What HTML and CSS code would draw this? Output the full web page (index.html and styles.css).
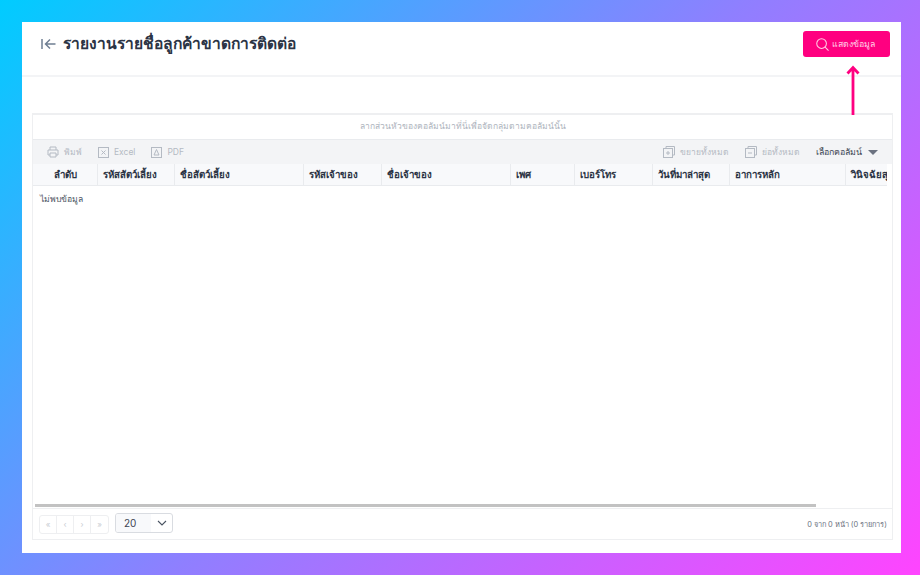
FILE: index.html
```html
<!DOCTYPE html>
<html lang="th">
<head>
<meta charset="utf-8">
<title>รายงานรายชื่อลูกค้าขาดการติดต่อ</title>
<link rel="stylesheet" href="styles.css">
</head>
<body>
<main class="panel">
  <header class="top">
    <div class="title-wrap">
      <svg class="back" width="15" height="12" viewBox="0 0 15 12" fill="none" stroke="#6f7f93" stroke-width="1.5"><path d="M1 1v10M14.500 6H5M9 1.500 4.500 6 9 10.500"/></svg>
      <h1>รายงานรายชื่อลูกค้าขาดการติดต่อ</h1>
    </div>
    <button class="show-btn">
      <svg width="13" height="13" viewBox="0 0 14 14" fill="none" stroke="#ffd0e6" stroke-width="1.100"><circle cx="6" cy="6" r="5.200"/><path d="m9.800 9.800 3.700 3.700"/></svg>
      <span>แสดงข้อมูล</span>
    </button>
  </header>
  <svg class="arrow" width="14" height="50" viewBox="0 0 14 50" fill="none" stroke="#ff0080" stroke-width="2.800"><path d="M7 50V3M1.500 8.500 7 2.500l5.500 6"/></svg>
  <section class="grid">
    <div class="group-panel">ลากส่วนหัวของคอลัมน์มาที่นี่เพื่อจัดกลุ่มตามคอลัมน์นั้น</div>
    <div class="toolbar">
      <div class="tools">
        <span class="tool"><svg width="12" height="12" viewBox="0 0 12 12" fill="none" stroke="#b4bac3"><path d="M3 4V1h6v3M3 9H1V4h10v5H9M3 7h6v4H3z"/></svg>พิมพ์</span>
        <span class="tool"><svg width="11" height="11" viewBox="0 0 11 11" fill="none" stroke="#b4bac3"><rect x=".5" y=".5" width="10" height="10"/><path d="m3.500 3.500 4 4M7.500 3.500l-4 4"/></svg>Excel</span>
        <span class="tool"><svg width="11" height="11" viewBox="0 0 11 11" fill="none" stroke="#b4bac3"><rect x=".5" y=".5" width="10" height="10"/><path d="M5.500 2.500 3 8h5z"/></svg>PDF</span>
      </div>
      <div class="tools">
        <span class="tool"><svg width="12" height="12" viewBox="0 0 12 12" fill="none" stroke="#b4bac3"><path d="M3 2V.5h8.500V9H10"/><rect x=".5" y="2.500" width="9" height="9"/><path d="M3 7h4M5 5v4"/></svg>ขยายทั้งหมด</span>
        <span class="tool"><svg width="12" height="12" viewBox="0 0 12 12" fill="none" stroke="#b4bac3"><path d="M3 2V.5h8.500V9H10"/><rect x=".5" y="2.500" width="9" height="9"/><path d="M3 7h4"/></svg>ย่อทั้งหมด</span>
        <span class="chooser">เลือกคอลัมน์<i class="caret"></i></span>
      </div>
    </div>
    <div class="head">
      <div class="cell c1">ลำดับ</div>
      <div class="cell c2">รหัสสัตว์เลี้ยง</div>
      <div class="cell c3">ชื่อสัตว์เลี้ยง</div>
      <div class="cell c2w">รหัสเจ้าของ</div>
      <div class="cell c3">ชื่อเจ้าของ</div>
      <div class="cell c4">เพศ</div>
      <div class="cell c2w">เบอร์โทร</div>
      <div class="cell c2">วันที่มาล่าสุด</div>
      <div class="cell c5">อาการหลัก</div>
      <div class="cell c6">วินิจฉัยสุดท้าย</div>
    </div>
    <div class="body">
      <p class="empty">ไม่พบข้อมูล</p>
      <div class="scroll"><div class="thumb"></div></div>
    </div>
    <footer class="pager">
      <div class="pager-left">
        <div class="pages">
          <span>«</span><span>‹</span><span>›</span><span>»</span>
        </div>
        <div class="size">
          <span class="size-val">20</span>
          <span class="size-btn"><svg width="10" height="6" viewBox="0 0 10 6" fill="none" stroke="#4b5563" stroke-width="1.100"><path d="m1 1 4 4 4-4"/></svg></span>
        </div>
      </div>
      <span class="info">0 จาก 0 หน้า (0 รายการ)</span>
    </footer>
  </section>
</main>
</body>
</html>
```
FILE: styles.css
```css
* { box-sizing: border-box; }
html, body { height: 100%; }
body {
  margin: 0;
  padding: 22px 19px 22px 22px;
  background: linear-gradient(135deg, #00ccff 0%, #8f7fff 50%, #ff44ff 100%);
  font-family: Inter, "Noto Sans", sans-serif;
  overflow: hidden;
}
.panel {
  position: relative;
  height: 531px;
  background: #fff;
  padding-bottom: 13px;
  display: flex;
  flex-direction: column;
}
.top {
  height: 55px;
  flex: none;
  display: flex;
  justify-content: space-between;
  align-items: flex-start;
  padding: 9px 11px 0 18px;
  border-bottom: 2px solid #f3f4f6;
}
.title-wrap { display: flex; align-items: center; gap: 7px; height: 25px; }
.back { margin-left: 1px; }
h1 { margin: 0; font-size: 15.600px; font-weight: 600; color: #2b3445; }
.show-btn {
  width: 87px;
  height: 26px;
  display: flex;
  align-items: center;
  padding: 0 0 0 13px;
  gap: 3px;
  border: 0;
  border-radius: 3px;
  background: #ff0080;
  color: #ffd0e6;
  font: 8.800px Inter, sans-serif;
}
.arrow { position: absolute; right: 41px; top: 43px; }
.grid {
  flex: 1;
  min-height: 0;
  margin: 36px 8px 0 10px;
  border: 1px solid #eeeff1;
  border-top-width: 2px;
  display: flex;
  flex-direction: column;
}
.group-panel {
  height: 24px;
  flex: none;
  display: flex;
  align-items: center;
  justify-content: center;
  padding-bottom: 2px;
  font-size: 8.500px;
  color: #aeb4bd;
}
.toolbar {
  height: 25px;
  flex: none;
  display: flex;
  justify-content: space-between;
  align-items: center;
  background: #f3f4f6;
  border-top: 1px solid #e9ebee;
  padding: 0 14px 0 14px;
  font-size: 8.500px;
  color: #b4bac3;
}
.tools { display: flex; align-items: center; gap: 16px; }
.tool { display: flex; align-items: center; gap: 5px; }
.chooser { display: flex; align-items: center; gap: 6px; font-size: 8.800px; color: #3d4654; }
.caret {
  width: 0;
  height: 0;
  border: 5px solid transparent;
  border-top: 5px solid #6b7280;
  border-bottom: 0;
}
.head {
  height: 22px;
  flex: none;
  display: flex;
  overflow: hidden;
  background: #f8f9fb;
  border-bottom: 1px solid #e9ebee;
  margin-right: 5px;
  font-size: 9.700px;
  font-weight: 600;
  color: #2b3445;
}
.cell {
  flex: none;
  display: flex;
  align-items: center;
  padding: 0 5px;
  border-right: 1px solid #e9ebee;
  white-space: nowrap;
  overflow: hidden;
}
.c1 { width: 65px; justify-content: center; }
.c2 { width: 77px; }
.c2w { width: 78px; }
.c3 { width: 129px; }
.c4 { width: 64px; }
.c5 { width: 116px; }
.c6 { flex: 1; border-right: 0; }
.body {
  flex: 1;
  min-height: 0;
  display: flex;
  flex-direction: column;
  justify-content: space-between;
}
.empty { margin: 6px 0 0 7px; font-size: 8.600px; color: #4b5563; }
.scroll { height: 4px; padding: 0 2px; }
.thumb { width: 781px; height: 3px; background: #c2c2c2; }
.pager {
  height: 31px;
  flex: none;
  display: flex;
  justify-content: space-between;
  align-items: center;
  padding: 0 5px 0 6px;
  border-top: 1px solid #eeeff1;
}
.pager-left { display: flex; align-items: center; gap: 6px; }
.pages {
  display: flex;
  height: 19px;
  border: 1px solid #eeeff1;
  border-radius: 3px;
}
.pages span {
  width: 17px;
  display: flex;
  align-items: center;
  justify-content: center;
  font-size: 8px;
  color: #c9cdd3;
  border-right: 1px solid #eeeff1;
}
.pages span:last-child { border-right: 0; }
.size {
  width: 58px;
  height: 20px;
  display: flex;
  border: 1px solid #d9dce1;
  border-radius: 3px;
  overflow: hidden;
  margin-bottom: 2px;
}
.size-val {
  flex: 1;
  background: #f8f9fb;
  padding-left: 8px;
  font-size: 10px;
  line-height: 18px;
  color: #3d4654;
}
.size-btn { width: 21px; display: flex; align-items: center; justify-content: center; }
.info { font-size: 7.400px; color: #6b7280; }
```
